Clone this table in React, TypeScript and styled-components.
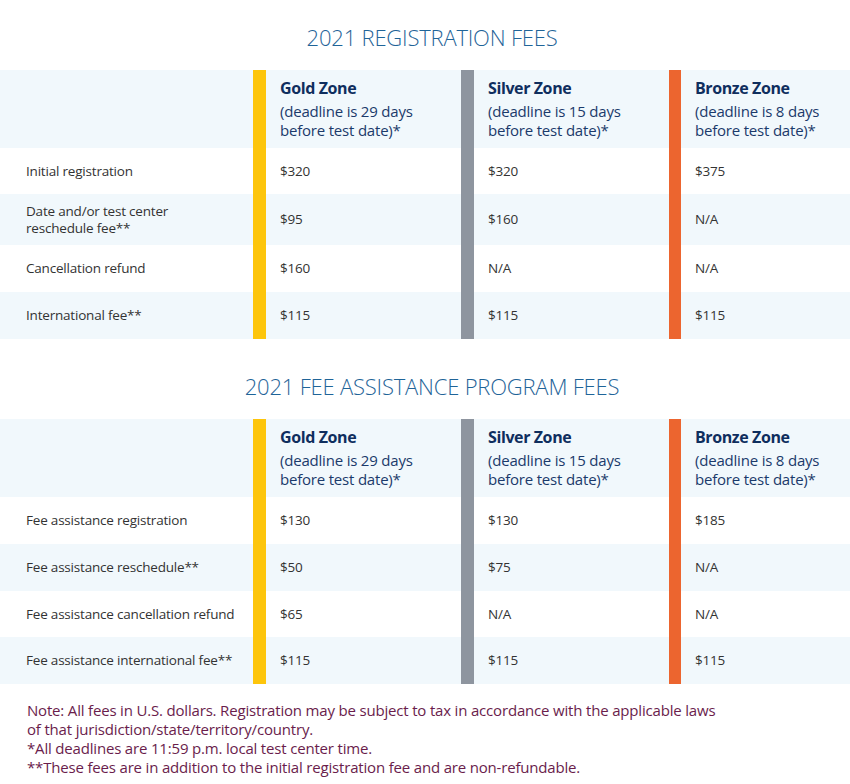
import React from "react";
import styled, { createGlobalStyle } from "styled-components";

const GlobalStyle = createGlobalStyle`
  html, body { margin: 0; padding: 0; background: #ffffff; }
  body { font-family: "Open Sans", "Noto Sans", Arial, sans-serif; }
`;

const zoneColors = {
  gold: "#fdc50c",
  silver: "#8e959f",
  bronze: "#ec652f",
} as const;

type Zone = keyof typeof zoneColors;

const Page = styled.div`
  width: 850px;
  display: flex;
  flex-direction: column;
`;

const Section = styled.section<{ $top: number }>`
  display: flex;
  flex-direction: column;
  margin-top: ${(p) => p.$top}px;
`;

const Title = styled.h2`
  margin: 0 0 20px;
  padding-left: 14px;
  text-align: center;
  font-family: "Open Sans", sans-serif;
  font-weight: 300;
  font-size: 22px;
  line-height: 26px;
  color: #1f6498;
  letter-spacing: -0.2px;
`;

const Table = styled.div`
  display: flex;
  flex-direction: column;
`;

const Row = styled.div<{ $shade: boolean; $height: number }>`
  display: grid;
  grid-template-columns: 253px 208px 208px 181px;
  min-height: ${(p) => p.$height}px;
  background: ${(p) => (p.$shade ? "#f1f8fc" : "#ffffff")};
`;

const LabelCell = styled.div`
  display: flex;
  align-items: center;
  padding: 8px 12px 8px 26px;
  font-size: 13.5px;
  line-height: 17px;
  letter-spacing: -0.2px;
  color: #333333;
`;

const ZoneCell = styled.div<{ $zone: Zone }>`
  display: flex;
  align-items: center;
  border-left: ${(p) => (p.$zone === "bronze" ? 12 : 13)}px solid ${(p) => zoneColors[p.$zone]};
  padding: 8px 10px 8px 14px;
  font-size: 13.5px;
  line-height: 17px;
  letter-spacing: -0.2px;
  color: #333333;
`;

const HeadCell = styled(ZoneCell)`
  flex-direction: column;
  align-items: flex-start;
  justify-content: flex-start;
  padding-top: 8px;
  padding-bottom: 8px;
`;

const ZoneName = styled.div`
  font-weight: 700;
  font-size: 16px;
  line-height: 20px;
  letter-spacing: -0.4px;
  color: #0f2e5e;
`;

const ZoneNote = styled.div`
  margin-top: 4px;
  font-size: 15px;
  line-height: 19px;
  letter-spacing: -0.2px;
  color: #1b3a6b;
`;

const Notes = styled.div`
  margin-top: 17px;
  padding-left: 27px;
  font-size: 15px;
  line-height: 19px;
  letter-spacing: -0.18px;
  color: #6a1d4c;
`;

type Header = { zone: Zone; name: string; note: [string, string] };

const headers: Header[] = [
  { zone: "gold", name: "Gold Zone", note: ["(deadline is 29 days", "before test date)*"] },
  { zone: "silver", name: "Silver Zone", note: ["(deadline is 15 days", "before test date)*"] },
  { zone: "bronze", name: "Bronze Zone", note: ["(deadline is 8 days", "before test date)*"] },
];

type FeeRow = { label: string[]; values: [string, string, string]; height?: number };

const registration: FeeRow[] = [
  { label: ["Initial registration"], values: ["$320", "$320", "$375"], height: 46 },
  { label: ["Date and/or test center", "reschedule fee**"], values: ["$95", "$160", "N/A"], height: 51 },
  { label: ["Cancellation refund"], values: ["$160", "N/A", "N/A"] },
  { label: ["International fee**"], values: ["$115", "$115", "$115"] },
];

const assistance: FeeRow[] = [
  { label: ["Fee assistance registration"], values: ["$130", "$130", "$185"] },
  { label: ["Fee assistance reschedule**"], values: ["$50", "$75", "N/A"] },
  { label: ["Fee assistance cancellation refund"], values: ["$65", "N/A", "N/A"], height: 46 },
  { label: ["Fee assistance international fee**"], values: ["$115", "$115", "$115"] },
];

function FeeTable({ rows }: { rows: FeeRow[] }) {
  return (
    <Table>
      <Row $shade $height={78}>
        <LabelCell />
        {headers.map((h) => (
          <HeadCell key={h.zone} $zone={h.zone}>
            <ZoneName>{h.name}</ZoneName>
            <ZoneNote>
              {h.note[0]}
              <br />
              {h.note[1]}
            </ZoneNote>
          </HeadCell>
        ))}
      </Row>
      {rows.map((r, i) => (
        <Row key={i} $shade={i % 2 === 1} $height={r.height ?? 47}>
          <LabelCell>
            <span>
              {r.label.map((l, j) => (
                <React.Fragment key={j}>
                  {j > 0 && <br />}
                  {l}
                </React.Fragment>
              ))}
            </span>
          </LabelCell>
          {r.values.map((v, j) => (
            <ZoneCell key={j} $zone={headers[j].zone}>
              {v}
            </ZoneCell>
          ))}
        </Row>
      ))}
    </Table>
  );
}

export default function App() {
  return (
    <Page>
      <GlobalStyle />
      <Section $top={24}>
        <Title>2021 REGISTRATION FEES</Title>
        <FeeTable rows={registration} />
      </Section>
      <Section $top={34}>
        <Title>2021 FEE ASSISTANCE PROGRAM FEES</Title>
        <FeeTable rows={assistance} />
      </Section>
      <Notes>
        Note: All fees in U.S. dollars. Registration may be subject to tax in accordance with the applicable laws
        <br />
        of that jurisdiction/state/territory/country.
        <br />
        *All deadlines are 11:59 p.m. local test center time.
        <br />
        **These fees are in addition to the initial registration fee and are non-refundable.
      </Notes>
    </Page>
  );
}
